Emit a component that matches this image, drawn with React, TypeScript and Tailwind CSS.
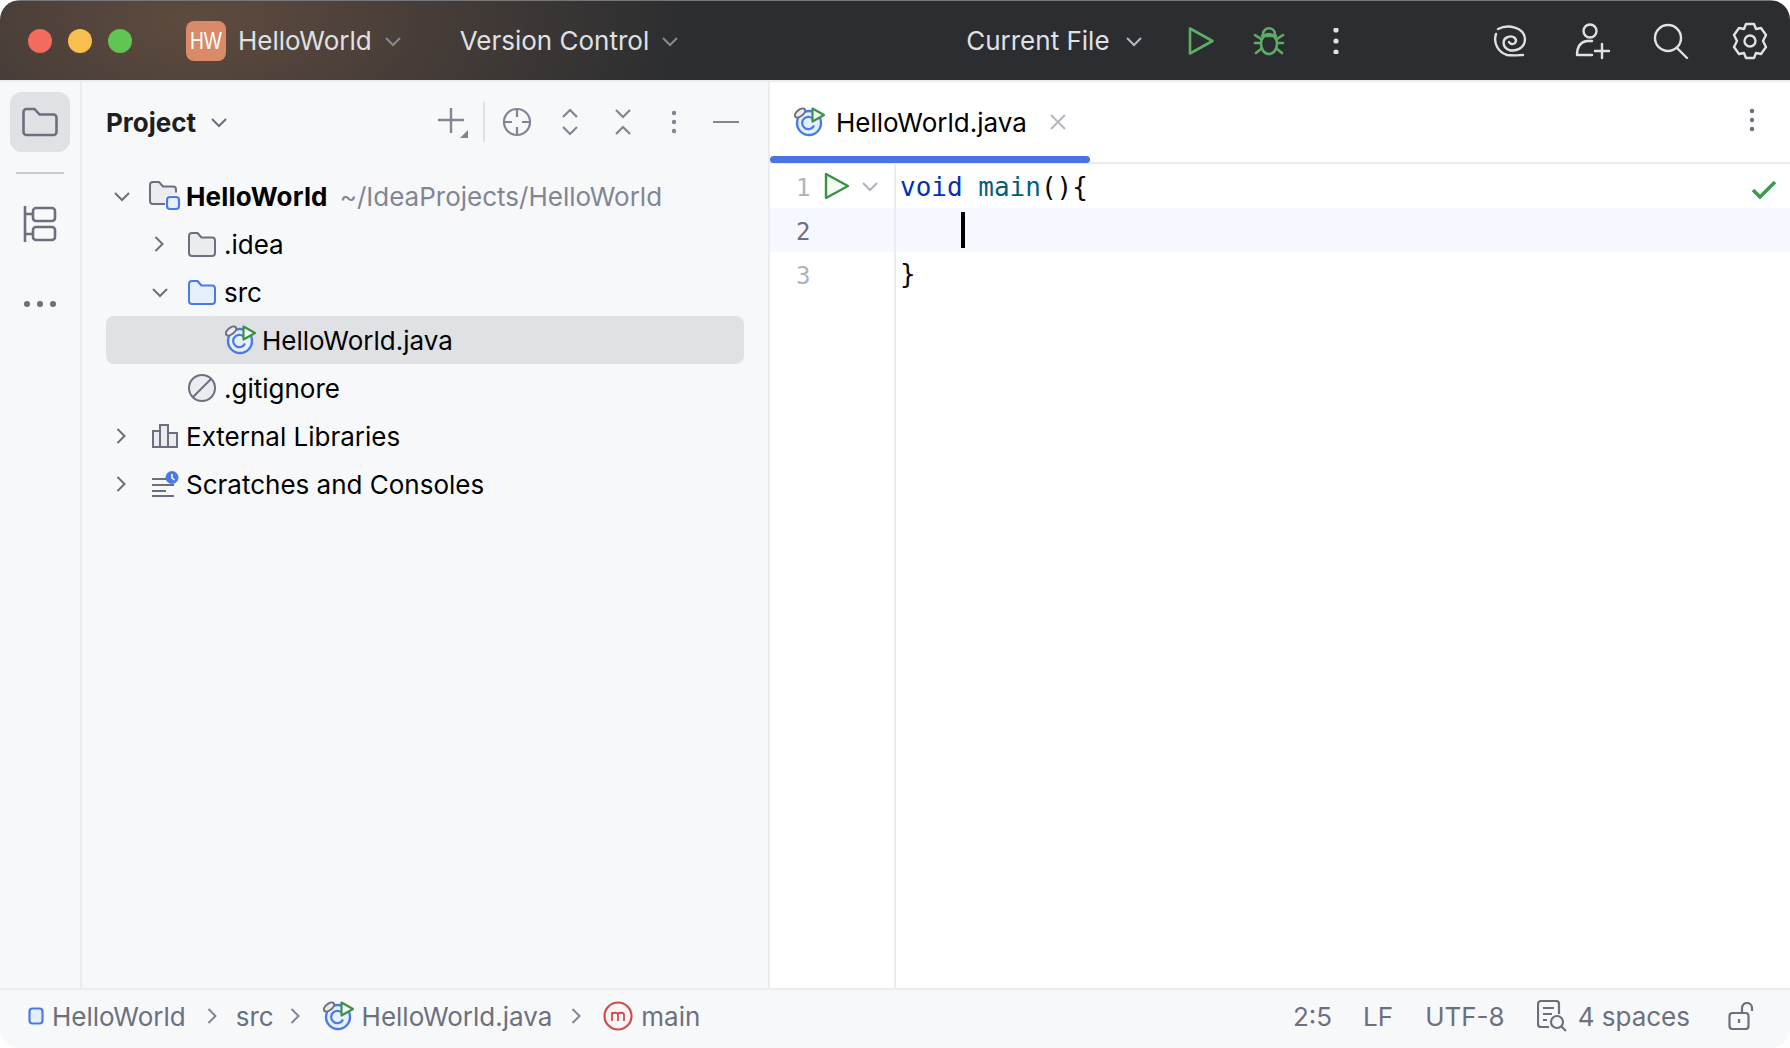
import React from 'react';

const Chevron = ({ dir = 'down', size = 18, color = '#818594', width = 2 }: { dir?: 'down' | 'right' | 'up'; size?: number; color?: string; width?: number }) => {
  const d = dir === 'down' ? 'M2 6l7 7 7-7' : dir === 'up' ? 'M2 12l7-7 7 7' : 'M4.500 2l7 7-7 7';
  return (
    <svg width={size} height={size} viewBox="0 0 18 18" fill="none" stroke={color} strokeWidth={width} className="shrink-0">
      <path d={d} />
    </svg>
  );
};

// class file icon with the run marker on it
const JavaIcon = () => (
  <svg width="32" height="32" viewBox="0 0 32 32" fill="none" className="shrink-0">
    <circle cx="15" cy="17" r="12" stroke="#4a7ae8" strokeWidth="2.4" fill="#e7effd" />
    <path d="M20 14.5a6.2 6.2 0 1 0 0 5" stroke="#4a7ae8" strokeWidth="2.2" />
    <ellipse cx="6" cy="7" rx="6" ry="3.2" transform="rotate(-38 6 7)" fill="#ebecf0" stroke="#6c707e" strokeWidth="2" />
    <path d="M18.5 2.5L30 9l-11.500 6.500z" fill="#f2fcf3" stroke="#3f8f46" strokeWidth="2.2" strokeLinejoin="round" />
  </svg>
);

const FolderIcon = ({ stroke = '#6c707e', fill = '#ebecf0' }: { stroke?: string; fill?: string }) => (
  <svg width="28" height="25" viewBox="0 0 28 25" fill={fill} stroke={stroke} strokeWidth="2" className="shrink-0 -ml-[2px]">
    <path d="M1 4a3 3 0 0 1 3-3h5.500l4 4.500H24a3 3 0 0 1 3 3V21a3 3 0 0 1-3 3H4a3 3 0 0 1-3-3z" strokeLinejoin="round" />
  </svg>
);

const Dots = ({ color, vertical = true, gap = 9, r = 2.2 }: { color: string; vertical?: boolean; gap?: number; r?: number }) => (
  <svg width={vertical ? 6 : 34} height={vertical ? 26 : 6} viewBox={vertical ? '0 0 6 26' : '0 0 34 6'} fill={color} className="shrink-0">
    {[-1, 0, 1].map((i) =>
      vertical ? <circle key={i} cx="3" cy={13 + i * gap} r={r} /> : <circle key={i} cx={17 + i * 13} cy="3" r={r + 0.6} />
    )}
  </svg>
);

const Row = ({ indent, arrow, icon, selected, children }: { indent: number; arrow?: 'down' | 'right'; icon: React.ReactNode; selected?: boolean; children: React.ReactNode }) => (
  <div className={`h-12 flex items-center rounded-lg ${selected ? 'bg-[#dfe1e5]' : ''}`}>
    <div className="flex items-center justify-center w-[40px] shrink-0" style={{ marginLeft: indent }}>
      {arrow && <Chevron dir={arrow} size={18} color="#6c707e" />}
    </div>
    <div className="w-[34px] flex items-center justify-center shrink-0 ml-[6px] mr-[4px]">{icon}</div>
    <div className="flex items-center whitespace-nowrap text-[#000000]">{children}</div>
  </div>
);

const GutterRow = ({ n, active, extra, children }: { n: number; active?: boolean; extra?: React.ReactNode; children?: React.ReactNode }) => (
  <div className={`h-11 flex ${active ? 'bg-[#f5f8fe]' : ''}`}>
    <div className="w-[126px] shrink-0 border-r-2 border-[#ebecf0] flex items-center pl-[26px]">
      <span className={`font-['DejaVu_Sans_Mono',monospace] text-[24px] w-[28px] pt-[3px] ${active ? 'text-[#6c707e]' : 'text-[#aeb3c2]'}`}>{n}</span>
      {extra}
    </div>
    <div className="flex-1 flex items-center pl-[4px] font-['DejaVu_Sans_Mono',monospace] text-[26px] text-[#080808] whitespace-pre">{children}</div>
  </div>
);

const App: React.FC = () => {
  return (
    <div className="w-[1790px] h-[1048px] bg-white">
      <div className="w-full h-full flex flex-col rounded-[20px] overflow-hidden font-['Inter',sans-serif] text-[26px] bg-[#f7f8fa]">
        {/* Title bar */}
        <div className="h-[80px] shrink-0 flex items-center bg-[radial-gradient(ellipse_500px_240px_at_195px_20px,#5f4b3f,#2b2d30)] text-[#dfe1e5] border-t border-[#77777a]">
          <div className="flex items-center gap-4 ml-[28px]">
            <div className="w-6 h-6 rounded-full bg-[#f36b5f]" />
            <div className="w-6 h-6 rounded-full bg-[#f6bf4f]" />
            <div className="w-6 h-6 rounded-full bg-[#61c554]" />
          </div>
          <div className="w-10 h-10 ml-[54px] rounded-lg bg-[#d98a68] text-white flex items-center justify-center text-[24px] font-['Liberation_Sans',sans-serif]">
            <span className="scale-x-[0.8]">HW</span>
          </div>
          <span className="ml-[12px]">HelloWorld</span>
          <div className="ml-[12px]"><Chevron size={18} color="#868a91" /></div>
          <span className="ml-[58px]">Version Control</span>
          <div className="ml-[12px]"><Chevron size={18} color="#868a91" /></div>
          <span className="ml-[287px]">Current File</span>
          <div className="ml-[15px]"><Chevron size={18} color="#b4b8bf" /></div>
          <svg width="28" height="30" viewBox="0 0 28 30" fill="none" stroke="#5fad65" strokeWidth="2.6" strokeLinejoin="round" className="ml-[44px]">
            <path d="M3 2.500L25.500 15 3 27.500z" />
          </svg>
          <svg width="32" height="30" viewBox="0 0 32 30" fill="none" stroke="#5fad65" strokeWidth="2.6" strokeLinecap="round" className="ml-[38px]">
            <ellipse cx="16" cy="18" rx="8" ry="10" />
            <path d="M10 9C10 0 22 0 22 9M9 10h14M2 9l6 4M2 17h5M3 27l5-4M30 9l-6 4M30 17h-5M29 27l-5-4" />
          </svg>
          <div className="ml-[48px]"><Dots color="#dfe1e5" gap={11} r={2.6} /></div>
          <svg width="34" height="34" viewBox="0 0 34 34" fill="none" stroke="#dfe1e5" strokeWidth="2.4" strokeLinecap="round" className="ml-[154px]">
            <path d="M5 5C15 0 31 3 32 15 32 24 23 28 16 26 9 23 9 15 15 13 20 11 25 15 22 19 20 21 17 20 16 18" />
            <path d="M3 10C0 19 5 28 14 31 21 32 27 31 30 31" />
          </svg>
          <svg width="38" height="38" viewBox="0 0 38 38" fill="none" stroke="#dfe1e5" strokeWidth="2.4" strokeLinecap="round" className="ml-[47px]">
            <circle cx="16" cy="9" r="6.500" />
            <path d="M3 33c0-8 3-13 10-14h5M3 33h15M28 22v14M21 29h14" />
          </svg>
          <svg width="36" height="36" viewBox="0 0 36 36" fill="none" stroke="#dfe1e5" strokeWidth="2.4" strokeLinecap="round" className="ml-[41px]">
            <circle cx="15" cy="15" r="13" />
            <path d="M24 25l10 10" />
          </svg>
          <svg width="36" height="38" viewBox="0 0 36 38" fill="none" stroke="#dfe1e5" strokeWidth="2.4" strokeLinejoin="round" className="ml-[43px]">
            <path d="M14 2h8l2 5 5-1 5 7-3 6 3 6-5 7-5-1-2 5h-8l-2-5-5 1-5-7 3-6-3-6 5-7 5 1z" />
            <circle cx="18" cy="19" r="5.500" />
          </svg>
        </div>
        <div className="h-[2px] shrink-0 bg-[#ebecf0]" />

        {/* Main area */}
        <div className="flex-1 flex min-h-0">
          {/* Tool stripe */}
          <div className="w-[82px] shrink-0 border-r-2 border-[#ebecf0] flex flex-col items-center pt-[10px]">
            <div className="w-[60px] h-[60px] rounded-xl bg-[#dfe1e5] flex items-center justify-center">
              <svg width="36" height="30" viewBox="0 0 36 30" fill="none" stroke="#6c707e" strokeWidth="2.6" strokeLinejoin="round">
                <path d="M1.500 5a3 3 0 0 1 3-3h8l5 5.500h14a3 3 0 0 1 3 3V25a3 3 0 0 1-3 3h-27a3 3 0 0 1-3-3z" />
              </svg>
            </div>
            <div className="w-12 h-[2px] bg-[#c9ccd6] mt-5" />
            <svg width="34" height="38" viewBox="0 0 34 38" fill="none" stroke="#6c707e" strokeWidth="2.6" className="mt-[31px]">
              <path d="M2 1v36M2 9h8M2 29h8" />
              <rect x="10" y="3" width="22" height="13" rx="3" />
              <rect x="10" y="22" width="22" height="13" rx="3" />
            </svg>
            <div className="mt-[58px]"><Dots color="#6c707e" vertical={false} r={2.400} /></div>
          </div>

          {/* Project panel */}
          <div className="w-[688px] shrink-0 border-r-2 border-[#ebecf0] flex flex-col pl-6 pr-6">
            <div className="h-20 shrink-0 flex items-center">
              <span className="font-bold text-[#1e1f22]">Project</span>
              <div className="ml-[14px]"><Chevron size={18} color="#6c707e" /></div>
              <svg width="32" height="32" viewBox="0 0 32 32" fill="none" stroke="#818594" strokeWidth="2.4" className="ml-[210px] mt-[2px]">
                <path d="M13 1v25M0 13h26" />
                <path d="M30 23v8h-8z" fill="#818594" stroke="none" />
              </svg>
              <div className="w-[2px] h-10 bg-[#dfe1e5] ml-[13px]" />
              <svg width="30" height="30" viewBox="0 0 30 30" fill="none" stroke="#818594" strokeWidth="2.2" className="ml-[17px]">
                <circle cx="15" cy="15" r="13" />
                <path d="M15 2v8M15 20v8M2 15h8M20 15h8" />
              </svg>
              <svg width="18" height="28" viewBox="0 0 18 28" fill="none" stroke="#818594" strokeWidth="2.2" className="ml-[29px]">
                <path d="M2 9l7-7 7 7M2 19l7 7 7-7" />
              </svg>
              <svg width="18" height="28" viewBox="0 0 18 28" fill="none" stroke="#818594" strokeWidth="2.2" className="ml-[35px]">
                <path d="M2 2l7 7 7-7M2 26l7-7 7 7" />
              </svg>
              <div className="ml-[39px]"><Dots color="#818594" /></div>
              <div className="w-[26px] h-[2.5px] bg-[#818594] ml-[36px]" />
            </div>
            <div className="pt-[10px] flex flex-col">
              <Row
                indent={-4}
                arrow="down"
                icon={
                  <svg width="32" height="30" viewBox="0 0 32 30" fill="none" className="shrink-0">
                    <path d="M1 4a3 3 0 0 1 3-3h6l4 4.500h10a3 3 0 0 1 3 3V14H16v9H4a3 3 0 0 1-3-3z" fill="#ebecf0" />
                    <path d="M16 23H4a3 3 0 0 1-3-3V4a3 3 0 0 1 3-3h6l4 4.500h10a3 3 0 0 1 3 3v3" stroke="#6c707e" strokeWidth="2" strokeLinejoin="round" />
                    <rect x="18" y="16" width="12" height="12" rx="3" fill="#e7effd" stroke="#4a7ae8" strokeWidth="2.200" />
                  </svg>
                }
              >
                <span className="font-bold tracking-[0.2px]">HelloWorld</span>
                <span className="ml-[12px] text-[#818594]">~/IdeaProjects/HelloWorld</span>
              </Row>
              <Row indent={34} arrow="right" icon={<FolderIcon />}>.idea</Row>
              <Row indent={34} arrow="down" icon={<FolderIcon stroke="#4a7ae8" fill="#e7effd" />}>src</Row>
              <Row indent={72} selected icon={<JavaIcon />}>HelloWorld.java</Row>
              <Row
                indent={34}
                icon={
                  <svg width="28" height="28" viewBox="0 0 28 28" fill="#ebecf0" stroke="#6c707e" strokeWidth="2" className="shrink-0 -ml-[2px]">
                    <circle cx="14" cy="14" r="13" />
                    <path d="M5 23L23 5" />
                  </svg>
                }
              >
                .gitignore
              </Row>
              <Row
                indent={-4}
                arrow="right"
                icon={
                  <svg width="26" height="24" viewBox="0 0 26 24" fill="#ebecf0" stroke="#6c707e" strokeWidth="2" className="shrink-0">
                    <path d="M1 7h7v16H1zM8 1h8v22H8zM16 9h9v14h-9z" />
                  </svg>
                }
              >
                External Libraries
              </Row>
              <Row
                indent={-4}
                arrow="right"
                icon={
                  <svg width="28" height="26" viewBox="0 0 28 26" fill="none" className="shrink-0">
                    <path d="M1 8h14M1 14h22M1 20h14M1 25h22" stroke="#6c707e" strokeWidth="2" />
                    <circle cx="21" cy="6.500" r="6.500" fill="#4a7ae8" />
                    <path d="M21 3v4l2.500 2" stroke="#fff" strokeWidth="1.500" />
                  </svg>
                }
              >
                Scratches and Consoles
              </Row>
            </div>
          </div>

          {/* Editor */}
          <div className="flex-1 flex flex-col min-w-0 bg-white">
            <div className="h-[82px] shrink-0 flex border-b-2 border-[#ebecf0]">
              <div className="w-[320px] flex flex-col">
                <div className="flex-1 flex items-center pl-[24px] pt-[6px]">
                  <JavaIcon />
                  <span className="ml-[10px] text-[#000000]">HelloWorld.java</span>
                  <svg width="16" height="16" viewBox="0 0 16 16" stroke="#b4b8bf" strokeWidth="2" className="ml-[23px]">
                    <path d="M1 1l14 14M15 1L1 15" />
                  </svg>
                </div>
                <div className="h-[7px] rounded-[4px] bg-[#4a74e4] -mb-[1px]" />
              </div>
              <div className="ml-auto mr-[35px] mt-[25px]"><Dots color="#6c707e" /></div>
            </div>
            <div className="flex-1 flex flex-col min-h-0">
              <GutterRow
                n={1}
                extra={
                  <>
                    <svg width="26" height="28" viewBox="0 0 26 28" fill="#f2fcf3" stroke="#3f8f46" strokeWidth="2.4" strokeLinejoin="round">
                      <path d="M2 2l22 12L2 26z" />
                    </svg>
                    <div className="ml-[11px]"><Chevron size={18} color="#aeb3c2" /></div>
                  </>
                }
              >
                <span className="pt-[2px]"><span className="text-[#0033b3]">void</span> <span className="text-[#00627a]">main</span>(){'{'}</span>
                <svg width="26" height="20" viewBox="0 0 26 20" fill="none" stroke="#3f9a50" strokeWidth="3.6" className="ml-auto mr-[13px] mt-[7px]">
                  <path d="M2 10l7 7L24 2" />
                </svg>
              </GutterRow>
              <GutterRow n={2} active>
                <span className="w-[61px]" />
                <span className="w-[3.500px] h-[36px] bg-black" />
              </GutterRow>
              <GutterRow n={3}>{'}'}</GutterRow>
              <div className="flex-1 flex">
                <div className="w-[126px] border-r-2 border-[#ebecf0]" />
              </div>
            </div>
          </div>
        </div>

        {/* Status bar */}
        <div className="h-[60px] shrink-0 border-t-2 border-[#ebecf0] flex items-center pb-[6px] text-[#6c707e]">
          <svg width="16" height="18" viewBox="0 0 16 18" fill="#e7effd" stroke="#4a7ae8" strokeWidth="2.200" className="ml-[28px]">
            <rect x="1.500" y="1.500" width="13" height="15" rx="3" />
          </svg>
          <span className="ml-[8px]">HelloWorld</span>
          <div className="ml-[18px]"><Chevron dir="right" size={18} color="#818594" /></div>
          <span className="ml-[14px]">src</span>
          <div className="ml-[13px]"><Chevron dir="right" size={18} color="#818594" /></div>
          <div className="ml-[18px]"><JavaIcon /></div>
          <span className="ml-[7px]">HelloWorld.java</span>
          <div className="ml-[16px]"><Chevron dir="right" size={18} color="#818594" /></div>
          <svg width="30" height="30" viewBox="0 0 30 30" fill="#fff4f4" stroke="#c94f4f" strokeWidth="2.200" className="ml-[17px]">
            <circle cx="15" cy="15" r="13.500" />
            <path d="M9 20v-9M9 14c0-3 6-3 6 0v6M15 14c0-3 6-3 6 0v6" fill="none" strokeWidth="1.800" />
          </svg>
          <span className="ml-[8px]">main</span>

          <span className="ml-auto">2:5</span>
          <span className="ml-[31px]">LF</span>
          <span className="ml-[32px]">UTF-8</span>
          <svg width="30" height="32" viewBox="0 0 30 32" fill="none" stroke="#6c707e" strokeWidth="2.200" className="ml-[32px]">
            <path d="M12 27H4a3 3 0 0 1-3-3V4a3 3 0 0 1 3-3h15a3 3 0 0 1 3 3v10M6 8h11M6 14h9M6 20h4" />
            <circle cx="20" cy="22" r="6" />
            <path d="M24.500 26.500l4.500 4.500" />
          </svg>
          <span className="ml-[11px]">4 spaces</span>
          <svg width="28" height="28" viewBox="0 0 28 28" fill="none" stroke="#6c707e" strokeWidth="2.200" className="ml-[38px] mr-[34px]">
            <rect x="1.500" y="11" width="19" height="16" rx="3" />
            <path d="M11 17v4M14 11V6a5 5 0 0 1 10 0v3" />
          </svg>
        </div>
      </div>
    </div>
  );
};

export default App;
